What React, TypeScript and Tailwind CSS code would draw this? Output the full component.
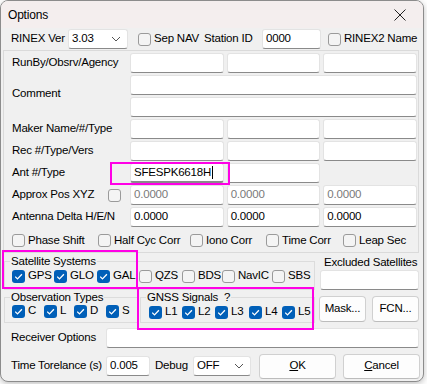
import React from "react";

const inputCls =
  "h-[20px] bg-white border border-[#e3e3e3] border-b-[#8a8a8a] rounded-[3px] px-[3px] flex items-center leading-none";

function Box({ text, gray, className = "" }: { text?: string; gray?: boolean; className?: string }) {
  return (
    <div className={`${inputCls} ${gray ? "text-[#7a7a7a]" : "text-black"} ${className}`}>
      {text}
    </div>
  );
}

function Check({ on, label, className = "" }: { on?: boolean; label?: string; className?: string }) {
  return (
    <div className={`flex items-center gap-[3px] shrink-0 ${className}`}>
      {on ? (
        <span className="w-[13px] h-[13px] shrink-0 rounded-[3px] bg-[#005fb8] flex items-center justify-center">
          <svg width="9" height="9" viewBox="0 0 9 9">
            <path d="M1.2 4.6 L3.5 6.9 L7.9 2.2" fill="none" stroke="white" strokeWidth="1.3" />
          </svg>
        </span>
      ) : (
        <span className="w-[13px] h-[13px] shrink-0 rounded-[3px] border border-[#9a9a9a] bg-[#f4f4f4]" />
      )}
      {label && <span className="leading-none">{label}</span>}
    </div>
  );
}

function Chevron() {
  return (
    <svg width="10" height="6" viewBox="0 0 10 6">
      <path d="M1 1 L5 5 L9 1" fill="none" stroke="#555" strokeWidth="1" />
    </svg>
  );
}

function Btn({ children, className = "" }: { children: React.ReactNode; className?: string }) {
  return (
    <div
      className={`shrink-0 bg-[#fdfdfd] border border-[#d0d0d0] border-b-[#bcbcbc] rounded-[4px] flex items-center justify-center ${className}`}
    >
      {children}
    </div>
  );
}

export default function App() {
  return (
    <div className="relative w-[427px] h-[384px] bg-white font-['Liberation_Sans',sans-serif] text-[11.5px] tracking-[-0.2px] whitespace-nowrap text-black">
      <div className="w-[424px] h-[382px] border border-[#8c8c8c] rounded-[8px] bg-[#f0f0f0] overflow-hidden flex flex-col shadow-[0_2px_6px_rgba(0,0,0,0.25)]">
        {/* barra de titulo */}
        <div className="h-[27px] bg-[#f4eeee] flex items-center justify-between pl-[7px] pr-[17px] shrink-0">
          <span className="text-[12px]">Options</span>
          <svg width="12" height="12" viewBox="0 0 12 12">
            <path d="M0.5 0.5 L11.5 11.5 M11.5 0.5 L0.5 11.5" stroke="#222" strokeWidth="1" />
          </svg>
        </div>

        <div className="flex flex-col pl-[2px] pr-[4px]">
          {/* fila rinex */}
          <div className="h-[20px] mt-[1px] flex items-center">
            <span className="ml-[8px] w-[57px] shrink-0">RINEX Ver</span>
            <div className="w-[60px] h-[20px] shrink-0 bg-white border border-[#e3e3e3] border-b-[#8a8a8a] rounded-[3px] flex items-center justify-between pl-[3px] pr-[6px]">
              <span>3.03</span>
              <Chevron />
            </div>
            <Check label="Sep NAV" className="ml-[10px] w-[66px]" />
            <span className="w-[58px] shrink-0">Station ID</span>
            <Box text="0000" className="w-[59px] shrink-0" />
            <Check label="RINEX2 Name" className="ml-[7px]" />
          </div>

          {/* panel principal */}
          <div className="mt-[1px] border border-[#dadada] pt-[2px] pr-[1px]">
            <div className="grid grid-cols-[123px_1fr_1fr_1fr] gap-x-[3px] gap-y-[2px]">
              <div className="h-[20px] flex items-center pl-[8px]">RunBy/Obsrv/Agency</div>
              <Box />
              <Box />
              <Box />

              <div className="row-span-2 flex items-center pl-[8px] pb-[4px]">Comment</div>
              <Box className="col-span-3" />
              <Box className="col-span-3" />

              <div className="h-[20px] flex items-center pl-[8px]">Maker Name/#/Type</div>
              <Box />
              <Box />
              <Box />

              <div className="h-[20px] flex items-center pl-[8px]">Rec #/Type/Vers</div>
              <Box />
              <Box />
              <Box />

              <div className="h-[20px] flex items-center pl-[8px]">Ant #/Type</div>
              <div className={`${inputCls} border-b-[2px] border-b-[#005fb8]`}>
                SFESPK6618H<span className="w-px h-[13px] bg-black ml-[1px]" />
              </div>
              <Box />
              <div />

              <div className="h-[20px] flex items-center justify-between pl-[8px] pr-[6px]">
                <span>Approx Pos XYZ</span>
                <Check />
              </div>
              <Box text="0.0000" gray />
              <Box text="0.0000" gray />
              <Box text="0.0000" gray />

              <div className="h-[20px] flex items-center pl-[8px]">Antenna Delta H/E/N</div>
              <Box text="0.0000" />
              <Box text="0.0000" />
              <Box text="0.0000" />
            </div>
            <div className="h-[23px] mt-[2px] flex items-center pl-[8px]">
              <Check label="Phase Shift" className="w-[86px]" />
              <Check label="Half Cyc Corr" className="w-[92px]" />
              <Check label="Iono Corr" className="w-[76px]" />
              <Check label="Time Corr" className="w-[77px]" />
              <Check label="Leap Sec" />
            </div>
          </div>

          {/* sistemas satelitales */}
          <div className="flex items-start">
            <fieldset className="w-[311px] h-[37px] shrink-0 border border-[#dcdcdc] ml-[1px]">
              <legend className="ml-[5px] px-[1px] leading-[16px]">Satellite Systems</legend>
              <div className="flex items-center h-[14px] pl-[7px]">
                <Check on label="GPS" className="w-[42px]" />
                <Check on label="GLO" className="w-[43px]" />
                <Check on label="GAL" className="w-[42px]" />
                <Check label="QZS" className="w-[43px]" />
                <Check label="BDS" className="w-[40px]" />
                <Check label="NavIC" className="w-[50px]" />
                <Check label="SBS" />
              </div>
            </fieldset>
            <div className="ml-[5px] flex-1 flex flex-col pt-[2px]">
              <span className="leading-[14px] pl-[4px]">Excluded Satellites</span>
              <Box className="mt-[1px]" />
            </div>
          </div>

          <div className="flex items-start">
            <fieldset className="w-[134px] h-[33px] shrink-0 border border-[#dcdcdc] ml-[1px]">
              <legend className="ml-[5px] px-[1px] leading-[14px]">Observation Types</legend>
              <div className="flex items-center h-[14px] pl-[7px]">
                <Check on label="C" className="w-[32px]" />
                <Check on label="L" className="w-[30px]" />
                <Check on label="D" className="w-[32px]" />
                <Check on label="S" />
              </div>
            </fieldset>
            <fieldset className="w-[175px] h-[33px] shrink-0 border border-[#dcdcdc] ml-[2px]">
              <legend className="ml-[5px] px-[1px] leading-[14px]">GNSS Signals&nbsp;&nbsp;?</legend>
              <div className="flex items-center h-[14px] pl-[8px] mt-[1px]">
                <Check on label="L1" className="w-[33px]" />
                <Check on label="L2" className="w-[33px]" />
                <Check on label="L3" className="w-[34px]" />
                <Check on label="L4" className="w-[33px]" />
                <Check on label="L5" />
              </div>
            </fieldset>
            <Btn className="w-[47px] h-[26px] mt-[6px] ml-[4px]">Mask...</Btn>
            <Btn className="w-[47px] h-[26px] mt-[6px] ml-[6px]">FCN...</Btn>
          </div>

          <div className="flex items-center mt-[5px] h-[20px]">
            <span className="pl-[8px] w-[103px] shrink-0">Receiver Options</span>
            <Box className="flex-1" />
          </div>

          <div className="flex items-center mt-[5px] h-[26px]">
            <span className="pl-[8px] w-[103px] shrink-0">Time Torelance (s)</span>
            <Box text="0.005" className="w-[44px] shrink-0" />
            <span className="ml-[5px] w-[38px] shrink-0">Debug</span>
            <div className="w-[58px] h-[20px] shrink-0 bg-white border border-[#e3e3e3] border-b-[#8a8a8a] rounded-[3px] flex items-center justify-between pl-[3px] pr-[6px]">
              <span>OFF</span>
              <Chevron />
            </div>
            <Btn className="w-[77px] h-[25px] ml-[8px]">
              <span>
                <u>O</u>K
              </span>
            </Btn>
            <Btn className="w-[77px] h-[25px] ml-[7px]">
              <span>
                <u>C</u>ancel
              </span>
            </Btn>
          </div>
        </div>
      </div>

      {/* marcas magenta */}
      <div className="absolute left-[110px] top-[162px] w-[120px] h-[23px] border-2 border-[#ff00e6]" />
      <div className="absolute left-[2px] top-[250px] w-[136px] h-[39px] border-2 border-[#ff00e6]" />
      <div className="absolute left-[137px] top-[287px] w-[177px] h-[43px] border-2 border-[#ff00e6]" />
    </div>
  );
}
